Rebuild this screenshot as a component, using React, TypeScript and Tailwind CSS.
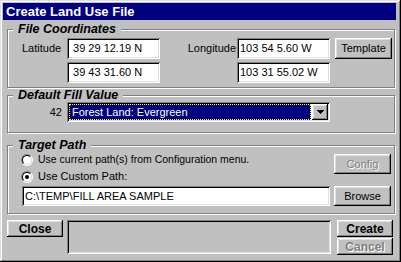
import type { ReactNode } from "react";

const raised =
  "bg-[#c0c0c0] shadow-[inset_-1px_-1px_0_#000,inset_1px_1px_0_#fff,inset_-2px_-2px_0_#808080,inset_2px_2px_0_#dfdfdf]";
const sunken =
  "shadow-[inset_1px_1px_0_#808080,inset_-1px_-1px_0_#fff,inset_2px_2px_0_#000,inset_-2px_-2px_0_#dfdfdf]";

function Button({
  children,
  className = "",
  bold = false,
  disabled = false,
}: {
  children: ReactNode;
  className?: string;
  bold?: boolean;
  disabled?: boolean;
}) {
  return (
    <button
      type="button"
      className={`${raised} flex items-center justify-center leading-none ${
        bold ? "font-bold text-[12px]" : "text-[11px]"
      } ${disabled ? "text-[#808080] [text-shadow:1px_1px_0_#fff]" : "text-black"} ${className}`}
    >
      {children}
    </button>
  );
}

function Field({ value, className = "" }: { value: string; className?: string }) {
  return (
    <div className={`${sunken} bg-white flex items-center pl-[3px] text-[11px] whitespace-pre ${className}`}>
      {value}
    </div>
  );
}

function Radio({ checked = false }: { checked?: boolean }) {
  return (
    <span className="w-[12px] h-[12px] rounded-full border border-t-[#808080] border-l-[#808080] border-r-white border-b-white flex items-center justify-center shrink-0">
      <span className="w-[10px] h-[10px] rounded-full border border-t-black border-l-black border-r-[#dfdfdf] border-b-[#dfdfdf] bg-white flex items-center justify-center">
        {checked && <span className="w-[4px] h-[4px] rounded-full bg-black" />}
      </span>
    </span>
  );
}

function Group({ title, className = "", children }: { title: string; className?: string; children: ReactNode }) {
  return (
    <fieldset className={`min-w-0 border border-[#808080] shadow-[inset_1px_1px_0_#fff,1px_1px_0_#fff] ${className}`}>
      <legend className="ml-[5px] px-[5px] bg-[#c0c0c0] text-[12.5px] leading-[13px] font-bold italic">{title}</legend>
      {children}
    </fieldset>
  );
}

export default function App() {
  return (
    <div className="w-[401px] h-[262px] bg-[#c0c0c0] pt-[3px] pl-[3px] pr-[5px] flex flex-col font-['Liberation_Sans',Arial,sans-serif] text-[11px] text-black shadow-[inset_-1px_-1px_0_#000,inset_1px_1px_0_#dfdfdf,inset_-2px_-2px_0_#808080,inset_2px_2px_0_#fff]">
      <div className="h-[17px] bg-[#000080] text-white font-bold text-[13px] flex items-center pl-[3px]">
        Create Land Use File
      </div>

      <div className="pl-[4px] pr-[1px] flex flex-col">
        {/* coordinates */}
        <Group title="File Coordinates" className="mt-[3px] h-[65px]">
          <div className="pl-[14px] pt-[2px] flex flex-col gap-[3px]">
            <div className="flex items-center h-[21px]">
              <span className="w-[45px]">Latitude</span>
              <Field value=" 39 29 12.19 N" className="w-[93px] h-[21px]" />
              <span className="w-[77px] text-right pr-[1px]">Longitude</span>
              <Field value="103 54 5.60 W" className="w-[93px] h-[21px]" />
              <Button className="ml-[5px] w-[57px] h-[21px]">Template</Button>
            </div>
            <div className="flex items-center h-[21px]">
              <span className="w-[45px]" />
              <Field value=" 39 43 31.60 N" className="w-[93px] h-[21px]" />
              <span className="w-[77px]" />
              <Field value="103 31 55.02 W" className="w-[93px] h-[21px]" />
            </div>
          </div>
        </Group>

        {/* fill value */}
        <Group title="Default Fill Value" className="mt-[1px] h-[44px]">
          <div className="pl-[14px] flex items-center h-[20px]">
            <span className="w-[45px] text-right pr-[5px]">42</span>
            <div className={`${sunken} bg-white w-[263px] h-[20px] p-[2px] flex`}>
              <div className="flex-1 bg-[#000080] border border-dotted border-[#ffff00] text-white flex items-center pl-[2px]">
                Forest Land: Evergreen
              </div>
              <div className={`${raised} ml-[1px] w-[16px] flex items-center justify-center`}>
                <svg width="7" height="4" viewBox="0 0 7 4" shapeRendering="crispEdges">
                  <rect x="0" y="0" width="7" height="1" fill="#000" />
                  <rect x="1" y="1" width="5" height="1" fill="#000" />
                  <rect x="2" y="2" width="3" height="1" fill="#000" />
                  <rect x="3" y="3" width="1" height="1" fill="#000" />
                </svg>
              </div>
            </div>
          </div>
        </Group>

        {/* target path */}
        <Group title="Target Path" className="mt-[6px] h-[75px]">
          <div className="pl-[13px] flex">
            <div className="w-[309px] flex flex-col">
              <div className="h-[16px] flex items-center gap-[5px]">
                <Radio />
                <span className="text-[10.5px]">Use current path(s) from Configuration menu.</span>
              </div>
              <div className="h-[17px] flex items-center gap-[5px]">
                <Radio checked />
                <span>Use Custom Path:</span>
              </div>
              <Field value="C:\TEMP\FILL AREA SAMPLE" className="ml-[1px] mt-[1px] w-[308px] h-[20px] pl-[2px]" />
            </div>
            <div className="ml-[4px] w-[57px] flex flex-col">
              <Button disabled className="mt-[2px] h-[20px]">
                Config
              </Button>
              <Button className="mt-[12px] h-[20px]">Browse</Button>
            </div>
          </div>
        </Group>

        {/* bottom actions */}
        <div className="mt-[6px] flex">
          <Button bold className="w-[56px] h-[17px]">
            Close
          </Button>
          <div className={`${sunken} ml-[4px] w-[264px] h-[34px]`} />
          <div className="ml-[6px] w-[56px] flex flex-col gap-[1px]">
            <Button bold className="h-[17px]">
              Create
            </Button>
            <Button bold disabled className="h-[17px]">
              Cancel
            </Button>
          </div>
        </div>
      </div>
    </div>
  );
}
